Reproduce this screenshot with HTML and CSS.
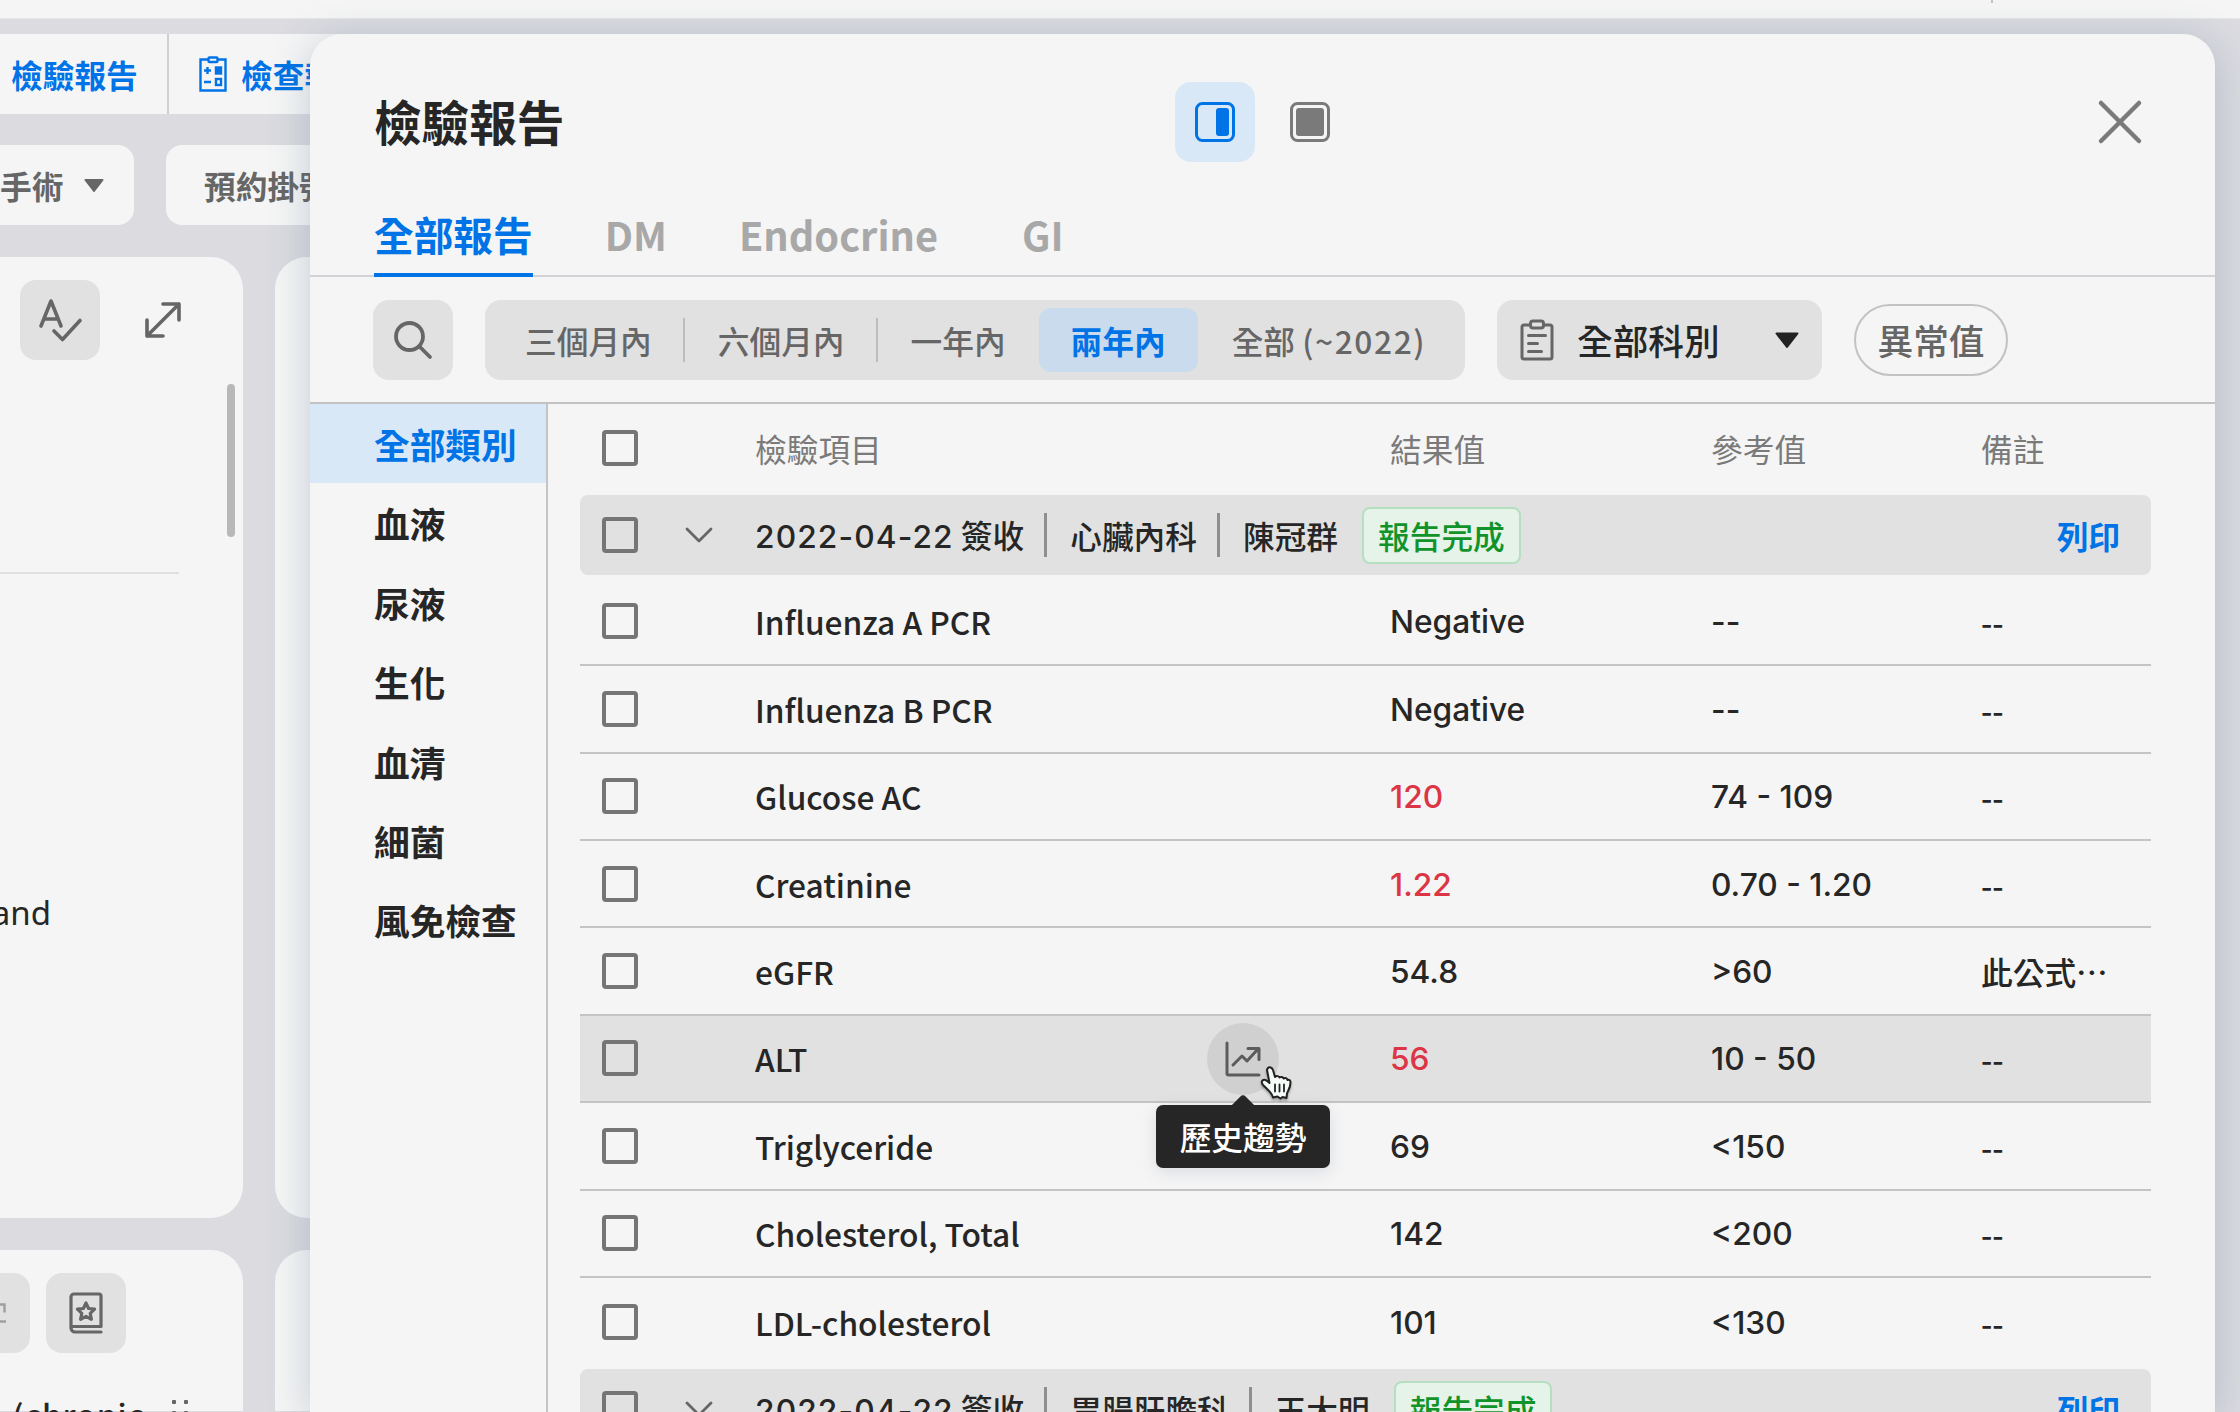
FILE: index.html
```html
<!DOCTYPE html>
<html lang="zh-Hant">
<head>
    <meta charset="UTF-8">
    <meta name="viewport" content="width=device-width, initial-scale=1.0">
    <title>檢驗報告</title>
    <link rel="stylesheet" href="styles.css">
</head>
<body>

    <!-- 病歷主畫面 -->
    <div class="page">
        <div class="topbar"><i></i></div>

        <div class="nav">
            <div class="nav-item first">檢驗報告</div>
            <div class="nav-item">
                <svg width="28" height="36" viewBox="0 0 28 36" fill="none" stroke="#0073e6" stroke-width="2.4">
                    <path d="M9 3.5H1.5v31h25v-31H19"/>
                    <rect x="9.5" y="1.5" width="9" height="4.5" rx="1"/>
                    <path d="M5 14.5h7M8.5 11v7M5 26h7"/>
                    <rect x="17" y="11.5" width="5" height="6" fill="#0073e6"/>
                    <rect x="17" y="23" width="5" height="6"/>
                </svg>
                <span>檢查報告</span>
            </div>
        </div>

        <div class="actions">
            <div class="action first">手術
                <svg width="20" height="13" viewBox="0 0 20 13"><path d="M1.5 1h17L10 12z" fill="#666" stroke="#666" stroke-width="2" stroke-linejoin="round"/></svg>
            </div>
            <div class="action">預約掛號</div>
        </div>

        <div class="cards">
            <div class="card">
                <div class="card-tools">
                    <span class="icon-btn">
                        <svg width="46" height="46" viewBox="0 0 46 46" fill="none" stroke="#666" stroke-width="3.6" stroke-linecap="round" stroke-linejoin="round">
                            <path d="M4 29L14 4l10 25M7.5 22h13M17 34l8.500 8.500L43 23.500"/>
                        </svg>
                    </span>
                    <svg class="expand" width="38" height="38" viewBox="0 0 38 38" fill="none" stroke="#666" stroke-width="3.6" stroke-linecap="round" stroke-linejoin="round">
                        <path d="M3 35L35 3M19 3h16v16M3 19v16h16"/>
                    </svg>
                </div>
                <div class="card-scroll"></div>
                <div class="card-line"></div>
                <div class="card-text">and</div>
            </div>
            <div class="card"></div>
            <div class="card">
                <div class="card-tools low">
                    <span class="icon-btn cut">
                        <svg width="6" height="20" viewBox="0 0 6 20" fill="none" stroke="#a0a0a0" stroke-width="2.5"><path d="M0 1.5h4.5v8M0 18.5h6"/></svg>
                    </span>
                    <span class="icon-btn">
                        <svg width="34" height="42" viewBox="0 0 34 42" fill="none" stroke="#666" stroke-width="3.2" stroke-linecap="round" stroke-linejoin="round">
                            <path d="M32 34.5V4a2 2 0 0 0-2-2H5a3 3 0 0 0-3 3v31a4 4 0 0 0 4 4h26M2 34.5h30"/>
                            <path d="M17 11l2.6 5.5 6 .7-4.4 4.1 1.2 6L17 24.3l-5.4 3 1.2-6-4.4-4.1 6-.7z"/>
                        </svg>
                    </span>
                </div>
                <div class="drug"><span>e (chronic</span><i></i></div>
            </div>
            <div class="card"></div>
        </div>
    </div>

    <!-- 檢驗報告視窗 -->
    <div class="modal">
        <div class="modal-head">
            <h1>檢驗報告</h1>
            <div class="view-mode">
                <span class="mode on">
                    <svg width="40" height="40" viewBox="0 0 40 40" fill="none"><rect x="1.5" y="1.5" width="37" height="37" rx="6" stroke="#0073e6" stroke-width="3"/><rect x="21" y="6" width="13" height="28" rx="3" fill="#0073e6"/></svg>
                </span>
                <span class="mode">
                    <svg width="40" height="40" viewBox="0 0 40 40" fill="none"><rect x="1.5" y="1.5" width="37" height="37" rx="6" stroke="#7a7a7a" stroke-width="3"/><rect x="6" y="6" width="28" height="28" rx="3" fill="#7a7a7a"/></svg>
                </span>
            </div>
            <svg class="close" width="46" height="46" viewBox="0 0 46 46" stroke="#7a7a7a" stroke-width="4.5" stroke-linecap="round"><path d="M4 4l38 38M42 4L4 42"/></svg>
        </div>

        <div class="tabs">
            <span class="tab on">全部報告</span>
            <span class="tab">DM</span>
            <span class="tab endo">Endocrine</span>
            <span class="tab">GI</span>
        </div>

        <div class="filters">
            <span class="icon-btn">
                <svg width="40" height="40" viewBox="0 0 40 40" fill="none" stroke="#666" stroke-width="3.8" stroke-linecap="round"><circle cx="16.5" cy="16.5" r="13.5"/><path d="M26.5 26.5L37 37"/></svg>
            </span>
            <div class="segment">
                <span class="seg line">三個月內</span>
                <span class="seg line">六個月內</span>
                <span class="seg">一年內</span>
                <span class="seg on">兩年內</span>
                <span class="seg last">全部 <em>(~2022)</em></span>
            </div>
            <div class="select">
                <svg width="34" height="42" viewBox="0 0 34 42" fill="none" stroke="#666" stroke-width="3" stroke-linecap="round" stroke-linejoin="round">
                    <path d="M10 6H4a2 2 0 0 0-2 2v30a2 2 0 0 0 2 2h26a2 2 0 0 0 2-2V8a2 2 0 0 0-2-2h-6"/>
                    <rect x="10.5" y="2" width="13" height="7" rx="2.5"/>
                    <path d="M8.5 16.5h17M8.5 24.5h9M8.5 32.5h13"/>
                </svg>
                <span>全部科別</span>
                <svg class="caret" width="26" height="17" viewBox="0 0 26 17"><path d="M2.5 1.5h21L13 15z" fill="#222" stroke="#222" stroke-width="2" stroke-linejoin="round"/></svg>
            </div>
            <span class="pill">異常值</span>
        </div>

        <div class="body">
            <div class="side">
                <div class="side-item on">全部類別</div>
                <div class="side-item">血液</div>
                <div class="side-item">尿液</div>
                <div class="side-item">生化</div>
                <div class="side-item">血清</div>
                <div class="side-item">細菌</div>
                <div class="side-item">風免檢查</div>
            </div>

            <div class="list">
                <div class="row head">
                    <i class="check"></i><span>檢驗項目</span><span>結果值</span><span>參考值</span><span>備註</span>
                </div>

                <div class="group">
                    <div class="group-bar">
                        <i class="check"></i>
                        <svg class="chev" width="28" height="18" viewBox="0 0 28 18" fill="none" stroke="#666" stroke-width="2.8" stroke-linecap="round" stroke-linejoin="round"><path d="M2 3l12 12L26 3"/></svg>
                        <span class="date"><em>2022-04-22</em> 簽收</span>
                        <span class="sep">心臟內科</span>
                        <span class="sep">陳冠群</span>
                        <span class="badge">報告完成</span>
                        <span class="print">列印</span>
                    </div>
                </div>

                <div class="row"><i class="check"></i><span>Influenza A PCR</span><span class="num">Negative</span><span class="num">--</span><span>--</span></div>
                <div class="row"><i class="check"></i><span>Influenza B PCR</span><span class="num">Negative</span><span class="num">--</span><span>--</span></div>
                <div class="row"><i class="check"></i><span>Glucose AC</span><span class="num red">120</span><span class="num">74 - 109</span><span>--</span></div>
                <div class="row"><i class="check"></i><span>Creatinine</span><span class="num red">1.22</span><span class="num">0.70 - 1.20</span><span>--</span></div>
                <div class="row"><i class="check"></i><span>eGFR</span><span class="num">54.8</span><span class="num">&gt;60</span><span>此公式⋯</span></div>
                <div class="row hover">
                    <i class="check"></i><span>ALT</span><span class="num red">56</span><span class="num">10 - 50</span><span>--</span>
                    <div class="trend">
                        <svg width="36" height="36" viewBox="0 0 36 36" fill="none" stroke="#5c5c5c" stroke-width="3" stroke-linecap="round" stroke-linejoin="round">
                            <path d="M2 2v30.5a1.5 1.5 0 0 0 1.5 1.5H34M8 24l9-9 5 5L33 8M23 7.5h11v11"/>
                        </svg>
                        <div class="tip">歷史趨勢</div>
                        <svg class="cursor" width="32" height="35" viewBox="0 0 32 35" fill="#f4faf6" stroke="#222" stroke-width="2" stroke-linejoin="round" stroke-linecap="round">
                            <path d="M7 4C8-.5 12 1 13 4l2 7c1.5-1.5 4-1 4.5.5 1.5-1 3.5-.5 4 1 2-1 3.5-.5 4 1.5 2-.5 3 .5 3 2.5 0 5-2.5 8-3.5 11l-.5 4.5-4-1-2 1.5-3-2-4.5 1C11.5 26 8 24 4 20c-2-2-3-4-1.5-5.5s4-.5 7 2.5z"/>
                            <path d="M15 18.5v7M19.5 18.5v7M24 18.5v7" stroke-width="1.8"/>
                        </svg>
                    </div>
                </div>
                <div class="row"><i class="check"></i><span>Triglyceride</span><span class="num">69</span><span class="num">&lt;150</span><span>--</span></div>
                <div class="row"><i class="check"></i><span>Cholesterol, Total</span><span class="num">142</span><span class="num">&lt;200</span><span>--</span></div>
                <div class="row end"><i class="check"></i><span>LDL-cholesterol</span><span class="num">101</span><span class="num">&lt;130</span><span>--</span></div>

                <div class="group">
                    <div class="group-bar">
                        <i class="check"></i>
                        <svg class="chev" width="28" height="18" viewBox="0 0 28 18" fill="none" stroke="#666" stroke-width="2.8" stroke-linecap="round" stroke-linejoin="round"><path d="M2 3l12 12L26 3"/></svg>
                        <span class="date"><em>2022-04-22</em> 簽收</span>
                        <span class="sep">胃腸肝膽科</span>
                        <span class="sep">王大明</span>
                        <span class="badge">報告完成</span>
                        <span class="print">列印</span>
                    </div>
                </div>
            </div>
        </div>
    </div>

</body>
</html>
```

FILE: styles.css
```css
* {
    margin: 0;
    padding: 0;
    box-sizing: border-box;
}
html {
    overflow: hidden;
}
body {
    width: 2240px;
    height: 1412px;
    overflow: hidden;
    position: relative;
    background: #dbdbe0;
    color: #262626;
    font-family: "Noto Sans CJK TC", sans-serif;
    font-size: 31.7px;
    font-weight: 500;
    line-height: 46px;
}
svg {
    display: block;
    flex: none;
}
i, em {
    font-style: normal;
}
span {
    white-space: nowrap;
}

/* 主畫面 */
.topbar {
    height: 19px;
    background: #f5f5f5;
    border-bottom: 1px solid #e6e6e8;
    padding-left: 1991px;
}
.topbar i {
    display: block;
    width: 2px;
    height: 3px;
    background: #c4c4c4;
}
.nav {
    display: flex;
    width: 1800px;
    height: 80px;
    margin-top: 15px;
    background: #f5f5f5;
    color: #0073e6;
    font-weight: 700;
}
.nav-item {
    display: flex;
    align-items: center;
    gap: 14px;
    padding-left: 29px;
}
.nav-item.first {
    width: 169px;
    padding-left: 11px;
    border-right: 2px solid #d0d0d2;
    padding-right: 20px;
    margin-right: 1px;
    white-space: nowrap;
}
.actions {
    display: flex;
    gap: 32px;
    margin-top: 31px;
    color: #666;
    font-weight: 700;
}
.action {
    display: flex;
    align-items: center;
    width: 240px;
    height: 80px;
    padding-left: 38px;
    border-radius: 16px;
    background: #f5f5f5;
}
.action.first {
    width: 134px;
    gap: 21px;
    padding-left: 0;
    border-radius: 0 16px 16px 0;
}
.cards {
    display: grid;
    grid-template-columns: 243px 400px;
    grid-template-rows: 961px 161px;
    gap: 32px;
    margin-top: 32px;
}
.card {
    border-radius: 32px;
    background: #f5f5f5;
}
.card:nth-child(odd) {
    border-radius: 0 32px 32px 0;
}
.card:nth-child(3) {
    border-radius: 0 32px 0 0;
}
.card:nth-child(4) {
    border-radius: 32px 0 0 0;
}
.card-tools {
    display: flex;
    align-items: center;
    gap: 44px;
    padding: 23px 0 0 20px;
}
.card-tools.low {
    gap: 16px;
    padding-left: 0;
}
.icon-btn {
    display: flex;
    align-items: center;
    justify-content: center;
    width: 80px;
    height: 80px;
    border-radius: 16px;
    background: #e1e1e1;
}
.icon-btn.cut {
    width: 30px;
    justify-content: flex-start;
    border-radius: 0 16px 16px 0;
}
.card-scroll {
    width: 8px;
    height: 153px;
    margin: 24px 0 0 227px;
    border-radius: 4px;
    background: #b8b8b8;
}
.card-line {
    width: 179px;
    height: 2px;
    margin-top: 35px;
    background: #e0e0e0;
}
.card-text {
    display: flex;
    justify-content: flex-end;
    width: 51px;
    margin-top: 316px;
    font-family: "Noto Sans", sans-serif;
    font-size: 33px;
    font-weight: 400;
}
.drug {
    display: flex;
    gap: 27px;
    height: 46px;
    margin-top: 38px;
    letter-spacing: 1px;
}
.drug span {
    display: flex;
    justify-content: flex-end;
    width: 145px;
}
.drug i {
    width: 18px;
    height: 20px;
    margin-top: 9px;
    background: radial-gradient(circle at 2px 2px, #666 2px, transparent 2.5px) 0 0 / 12px 11px;
}

/* 視窗 */
.modal {
    position: absolute;
    left: 310px;
    top: 34px;
    width: 1905px;
    height: 1378px;
    border-radius: 32px 32px 0 0;
    background: #f5f5f5;
    box-shadow: 0 8px 40px rgba(80, 105, 140, .3);
}
.modal-head {
    display: flex;
    align-items: center;
    height: 175px;
    padding: 0 72px 0 64px;
}
.modal-head h1 {
    width: 801px;
    margin-bottom: 1px;
    font-size: 47.6px;
    line-height: 70px;
}
.view-mode {
    display: flex;
    gap: 15px;
}
.mode {
    display: flex;
    align-items: center;
    justify-content: center;
    width: 80px;
    height: 80px;
    border-radius: 16px;
}
.mode.on {
    background: #d9e8f7;
}
.close {
    margin-left: auto;
}
.tabs {
    display: flex;
    gap: 72px;
    height: 68px;
    padding-left: 64px;
    border-bottom: 2px solid #d2d2d7;
    font-size: 39.7px;
    font-weight: 700;
    line-height: 49px;
    color: #a8a8a8;
}
.tab {
    height: 68px;
}
.tab.on {
    color: #0073e6;
    border-bottom: 4px solid #0073e6;
}
.tab.endo {
    margin-right: 12px;
}
.filters {
    display: flex;
    align-items: center;
    gap: 32px;
    height: 127px;
    padding: 1px 0 0 63px;
    border-bottom: 2px solid #c2c2c2;
}
.segment {
    display: flex;
    align-items: center;
    width: 980px;
    height: 80px;
    padding-left: 7px;
    border-radius: 16px;
    background: #e1e1e1;
    color: #666;
}
.seg {
    position: relative;
    padding: 0 33px;
}
.seg em {
    letter-spacing: 1.6px;
}
.seg.line::after {
    content: "";
    position: absolute;
    right: 0;
    top: 1px;
    width: 2px;
    height: 44px;
    background: #bdbdbd;
}
.seg.on {
    padding: 9px 32px;
    border-radius: 12px;
    background: #c9dbec;
    color: #0073e6;
    font-weight: 700;
}
.seg.last {
    padding-left: 34px;
}
.select {
    display: flex;
    align-items: center;
    width: 325px;
    height: 80px;
    padding: 0 22px 0 23px;
    border-radius: 16px;
    background: #e1e1e1;
    font-size: 35.7px;
}
.select span {
    margin-left: 23px;
}
.caret {
    margin-left: auto;
}
.pill {
    width: 154px;
    height: 72px;
    border: 2px solid #c2c2c2;
    border-radius: 36px;
    color: #666;
    font-size: 35.7px;
    line-height: 68px;
    text-align: center;
}
.body {
    display: flex;
    height: 1008px;
    overflow: hidden;
}
.side {
    width: 238px;
    border-right: 2px solid #c4c4c4;
    font-size: 35.7px;
    font-weight: 700;
}
.side-item {
    height: 79.4px;
    padding-left: 64px;
    line-height: 80px;
    white-space: nowrap;
}
.side-item.on {
    background: #d9e8f7;
    color: #0073e6;
}
.list {
    width: 1571px;
    margin-left: 32px;
}
.row {
    display: grid;
    grid-template-columns: 153px 635px 321px 270px 1fr;
    align-items: center;
    position: relative;
    height: 87.4px;
    padding-left: 22px;
    border-bottom: 2px solid #c4c4c4;
}
.row.head, .row.end {
    border-bottom: none;
}
.row.head {
    color: #7a7a7a;
    font-weight: 400;
}
.row.hover {
    background: #e1e1e1;
}
.check {
    width: 36px;
    height: 36px;
    border: 4px solid #757575;
    border-radius: 4px;
}
.num, .date em {
    font-family: Inter, sans-serif;
}
.num {
    padding-top: 2px;
}
.date em {
    letter-spacing: 1.1px;
}
.red {
    color: #dc3545;
}
.group {
    height: 87.4px;
    padding-top: 4px;
}
.group-bar {
    display: flex;
    align-items: center;
    height: 80px;
    padding: 0 31px 0 22px;
    border-radius: 8px;
    background: #e1e1e1;
}
.chev {
    margin: 0 42px 0 47px;
}
.sep {
    display: flex;
    align-items: center;
}
.sep::before {
    content: "";
    width: 3px;
    height: 44px;
    margin: 0 23px 0 20px;
    background: #8f8f8f;
}
.badge {
    height: 57px;
    margin-left: 24px;
    padding: 0 14px;
    border: 2px solid #b5dfc0;
    border-radius: 8px;
    background: #e5f3e8;
    color: #12932a;
    line-height: 53px;
}
.print {
    margin-left: auto;
    color: #0073e6;
    font-weight: 700;
}

/* 歷史趨勢按鈕與提示 */
.trend {
    position: absolute;
    left: 627px;
    top: 7px;
    display: flex;
    align-items: center;
    justify-content: center;
    width: 72px;
    height: 72px;
    border-radius: 50%;
    background: #d0d0d0;
}
.tip {
    position: absolute;
    left: -51px;
    top: 82px;
    z-index: 2;
    width: 174px;
    height: 63px;
    border-radius: 7px;
    background: #262626;
    color: #fff;
    line-height: 63px;
    text-align: center;
    box-shadow: 0 4px 16px rgba(60, 80, 120, .15);
}
.tip::before {
    content: "";
    position: absolute;
    left: 77px;
    top: -7px;
    width: 20px;
    height: 20px;
    border-radius: 4px;
    background: #262626;
    transform: rotate(45deg);
}
.cursor {
    position: absolute;
    left: 53px;
    top: 43px;
    z-index: 3;
    filter: drop-shadow(0 2px 1px rgba(0, 0, 0, .3));
}
```
